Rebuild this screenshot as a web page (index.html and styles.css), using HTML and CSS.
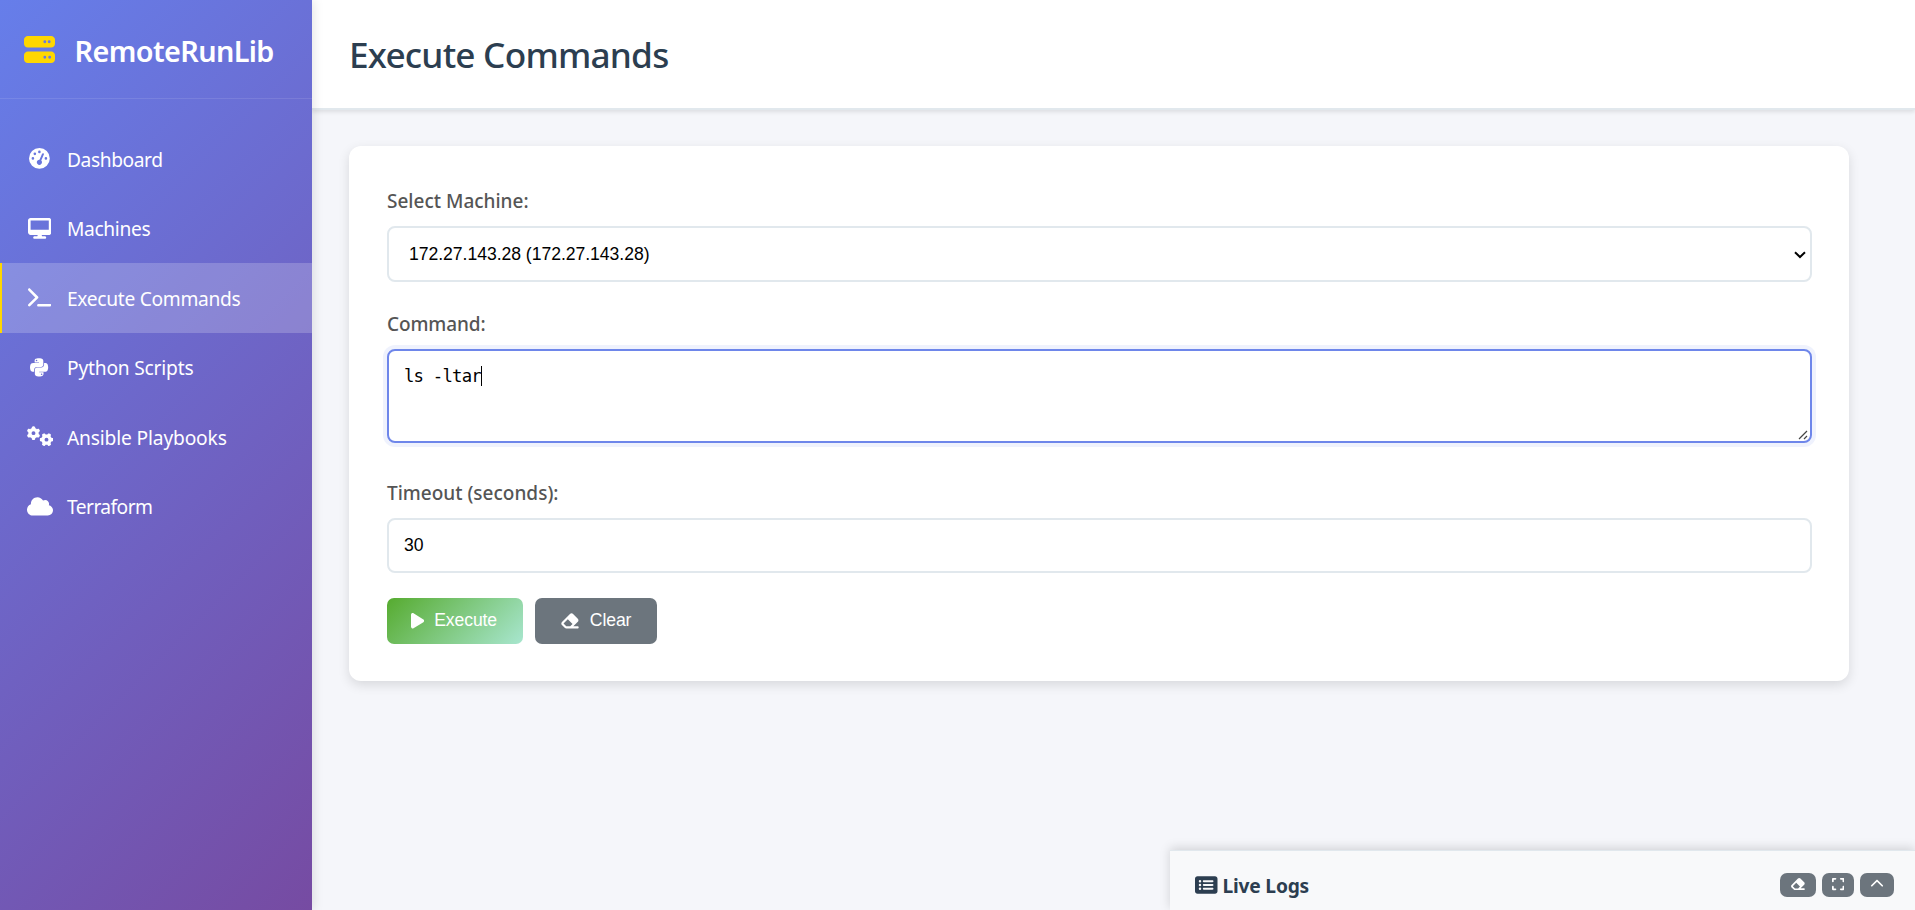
FILE: index.html
```html
<!DOCTYPE html>
<html lang="en">
<head>
<meta charset="utf-8">
<title>RemoteRunLib</title>
<link rel="stylesheet" href="styles.css">
</head>
<body>
<svg class="defs" aria-hidden="true">
  <symbol id="eraser" viewBox="0 0 576 512"><path d="M290.7 57.4L57.4 290.7c-25 25-25 65.5 0 90.5l80 80c12 12 28.3 18.7 45.3 18.7H288h9.4H512c17.7 0 32-14.3 32-32s-14.3-32-32-32H387.9L518.6 285.3c25-25 25-65.5 0-90.5L381.3 57.4c-25-25-65.5-25-90.5 0zM297.4 416H288l-105.4 0-80-80L227.3 211.3 364.7 348.7 297.4 416z"/></symbol>
  <symbol id="cog" viewBox="0 0 320 344"><path d="M308.5 135.3c7.1-6.3 9.9-16.2 6.2-25c-2.3-5.3-4.8-10.5-7.6-15.5L304 89.4c-3-5-6.3-9.9-9.8-14.6c-5.7-7.6-15.7-10.1-24.7-7.1l-28.2 9.3c-10.7-8.8-23-16-36.2-20.9L199 27.1c-1.9-9.3-9.1-16.7-18.5-17.8C173.9 8.4 167.2 8 160.4 8h-.7c-6.8 0-13.5 .4-20.1 1.2c-9.4 1.1-16.6 8.6-18.5 17.8L115 56.1c-13.3 5-25.5 12.1-36.2 20.9L50.5 67.8c-9-3-19-.5-24.7 7.1c-3.5 4.7-6.8 9.6-9.9 14.6l-3 5.3c-2.8 5-5.3 10.2-7.6 15.6c-3.7 8.7-.9 18.6 6.2 25l22.2 19.8C32.6 161.9 32 168.9 32 176s.6 14.1 1.7 20.9L11.5 216.7c-7.1 6.3-9.9 16.2-6.2 25c2.3 5.3 4.8 10.5 7.6 15.6l3 5.2c3 5.1 6.3 9.9 9.9 14.6c5.7 7.6 15.7 10.1 24.7 7.1l28.2-9.3c10.7 8.8 23 16 36.2 20.9l6.1 29.1c1.9 9.3 9.1 16.7 18.5 17.8c6.7 .8 13.5 1.2 20.4 1.2s13.7-.4 20.4-1.2c9.4-1.1 16.6-8.6 18.5-17.8l6.1-29.1c13.3-5 25.5-12.1 36.2-20.9l28.2 9.3c9 3 19 .5 24.7-7.1c3.5-4.7 6.8-9.5 9.8-14.6l3.1-5.4c2.8-5 5.3-10.2 7.6-15.5c3.7-8.7 .9-18.6-6.2-25l-22.2-19.8c1.1-6.8 1.7-13.8 1.7-20.9s-.6-14.1-1.7-20.9l22.2-19.8zM112 176a48 48 0 1 1 96 0 48 48 0 1 1 -96 0z"/></symbol>
</svg>
<div class="app">
  <aside class="sidebar">
    <div class="brand">
      <svg class="brand-icon" viewBox="0 0 512 512"><path d="M64 32C28.7 32 0 60.7 0 96v64c0 35.3 28.7 64 64 64H448c35.3 0 64-28.7 64-64V96c0-35.3-28.7-64-64-64H64zm280 72a24 24 0 1 1 0 48 24 24 0 1 1 0-48zm48 24a24 24 0 1 1 48 0 24 24 0 1 1 -48 0zM64 288c-35.3 0-64 28.7-64 64v64c0 35.3 28.7 64 64 64H448c35.3 0 64-28.7 64-64V352c0-35.3-28.7-64-64-64H64zm280 72a24 24 0 1 1 0 48 24 24 0 1 1 0-48zm56 24a24 24 0 1 1 48 0 24 24 0 1 1 -48 0z"/></svg>
      <span class="brand-name">RemoteRunLib</span>
    </div>
    <nav class="nav">
      <a class="nav-item"><span class="nav-icon"><svg viewBox="0 0 512 512"><path d="M0 256a256 256 0 1 1 512 0A256 256 0 1 1 0 256zM288 96a32 32 0 1 0 -64 0 32 32 0 1 0 64 0zM256 416c35.3 0 64-28.7 64-64c0-17.4-6.9-33.1-18.1-44.6L366 161.7c5.3-12.1-.2-26.3-12.3-31.6s-26.3 .2-31.6 12.3L257.9 288c-.6 0-1.3 0-1.9 0c-35.3 0-64 28.7-64 64s28.7 64 64 64zM176 144a32 32 0 1 0 -64 0 32 32 0 1 0 64 0zM96 288a32 32 0 1 0 0-64 32 32 0 1 0 0 64zm352-32a32 32 0 1 0 -64 0 32 32 0 1 0 64 0z"/></svg></span><span class="nav-text t-dash">Dashboard</span></a>
      <a class="nav-item"><span class="nav-icon"><svg viewBox="0 0 576 512"><path d="M64 0C28.7 0 0 28.7 0 64V352c0 35.3 28.7 64 64 64H240l-10.7 32H160c-17.7 0-32 14.3-32 32s14.3 32 32 32H416c17.7 0 32-14.3 32-32s-14.3-32-32-32H346.7L336 416H512c35.3 0 64-28.7 64-64V64c0-35.3-28.7-64-64-64H64zM512 64V288H64V64H512z"/></svg></span><span class="nav-text t-mach">Machines</span></a>
      <a class="nav-item active"><span class="nav-icon"><svg viewBox="0 0 576 512"><path d="M9.4 86.6C-3.1 74.1-3.1 53.9 9.4 41.4s32.8-12.5 45.3 0l192 192c12.5 12.5 12.5 32.8 0 45.3l-192 192c-12.5 12.5-32.8 12.5-45.3 0s-12.5-32.8 0-45.3L178.7 256 9.4 86.6zM256 416H544c17.7 0 32 14.3 32 32s-14.3 32-32 32H256c-17.7 0-32-14.3-32-32s14.3-32 32-32z"/></svg></span><span class="nav-text t-exec">Execute Commands</span></a>
      <a class="nav-item"><span class="nav-icon"><svg viewBox="0 0 448 512"><path d="M439.8 200.5c-7.7-30.9-22.3-54.2-53.4-54.2h-40.1v47.4c0 36.8-31.2 67.8-66.8 67.8H172.7c-29.2 0-53.4 25-53.4 54.3v101.8c0 29 25.2 46 53.4 54.3 33.8 9.9 66.3 11.7 106.8 0 26.9-7.8 53.4-23.5 53.4-54.3v-40.7H226.2v-13.6h160.2c31.1 0 42.6-21.7 53.4-54.2 11.2-33.5 10.7-65.7 0-108.6zM286.2 404c11.1 0 20.1 9.1 20.1 20.3 0 11.3-9 20.4-20.1 20.4-11 0-20.1-9.2-20.1-20.4.1-11.3 9.1-20.3 20.1-20.3zM167.8 248.1h106.8c29.7 0 53.4-24.5 53.4-54.3V91.9c0-29-24.4-50.7-53.4-55.6-35.8-5.9-74.7-5.6-106.8.1-45.2 8-53.4 24.7-53.4 55.6v40.7h106.9v13.6h-147c-31.1 0-58.3 18.7-66.8 54.2-9.8 40.7-10.2 66.1 0 108.6 7.6 31.6 25.7 54.2 56.8 54.2H101v-48.8c0-35.3 30.5-66.4 66.8-66.4zm-6.7-142.6c-11.1 0-20.1-9.1-20.1-20.3.1-11.3 9-20.4 20.1-20.4 11 0 20.1 9.2 20.1 20.4s-9 20.3-20.1 20.3z"/></svg></span><span class="nav-text t-py">Python Scripts</span></a>
      <a class="nav-item"><span class="nav-icon"><svg viewBox="0 0 640 512"><use href="#cog" width="320" height="344"/><use href="#cog" width="320" height="344" transform="translate(480 336) rotate(90) translate(-160 -176)"/></svg></span><span class="nav-text t-ans">Ansible Playbooks</span></a>
      <a class="nav-item"><span class="nav-icon"><svg viewBox="0 0 640 512"><path d="M0 336c0 79.5 64.5 144 144 144H512c70.7 0 128-57.3 128-128c0-61.9-44-113.6-102.4-125.4c4.1-10.7 6.4-22.4 6.4-34.6c0-53-43-96-96-96c-19.7 0-38.1 6-53.3 16.2C367 64.2 315.3 32 256 32C167.6 32 96 103.6 96 192c0 2.7 .1 5.4 .2 8.1C40.2 219.8 0 273.2 0 336z"/></svg></span><span class="nav-text t-terra">Terraform</span></a>
    </nav>
  </aside>
  <main class="main">
    <header class="header"><h1 class="title">Execute Commands</h1></header>
    <div class="content">
      <section class="card">
        <div class="label">Select Machine:</div>
        <div class="field select"><span>172.27.143.28 (172.27.143.28)</span>
          <svg class="chevron" viewBox="0 0 12 8"><path d="M1 1.2l5 4.8 5-4.8"/></svg>
        </div>
        <div class="label l-command">Command:</div>
        <div class="field textarea"><span>ls -ltar</span><i class="caret"></i>
          <svg class="grip" viewBox="0 0 10 10"><path d="M1 9l8-8M6 9l3-3"/></svg>
        </div>
        <div class="label">Timeout (seconds):</div>
        <div class="field number">30</div>
        <div class="actions">
          <button class="btn btn-run"><svg viewBox="0 0 384 512"><path d="M73 39c-14.8-9.1-33.4-9.4-48.5-.9S0 62.6 0 80V432c0 17.4 9.4 33.4 24.5 41.9s33.7 8.1 48.5-.9L361 297c14.3-8.7 23-24.2 23-41s-8.7-32.2-23-41L73 39z"/></svg><span>Execute</span></button>
          <button class="btn btn-clear"><svg viewBox="0 0 576 512"><use href="#eraser"/></svg><span>Clear</span></button>
        </div>
      </section>
    </div>
  </main>
</div>
<section class="logs">
  <div class="logs-title"><svg viewBox="0 0 576 512"><path d="M0 96C0 60.7 28.7 32 64 32H512c35.3 0 64 28.7 64 64V416c0 35.3-28.7 64-64 64H64c-35.3 0-64-28.7-64-64V96zM128 288a32 32 0 1 0 0-64 32 32 0 1 0 0 64zm32-128a32 32 0 1 0 -64 0 32 32 0 1 0 64 0zM128 384a32 32 0 1 0 0-64 32 32 0 1 0 0 64zm96-248c-13.3 0-24 10.7-24 24s10.7 24 24 24H448c13.3 0 24-10.7 24-24s-10.7-24-24-24H224zm0 96c-13.3 0-24 10.7-24 24s10.7 24 24 24H448c13.3 0 24-10.7 24-24s-10.7-24-24-24H224zm0 96c-13.3 0-24 10.7-24 24s10.7 24 24 24H448c13.3 0 24-10.7 24-24s-10.7-24-24-24H224z"/></svg><span class="logs-name">Live Logs</span></div>
  <div class="logs-tools">
    <button class="tool tool-a"><svg viewBox="0 0 576 512"><use href="#eraser"/></svg></button>
    <button class="tool tool-b"><svg viewBox="0 0 448 512"><path d="M32 32C14.3 32 0 46.3 0 64v96c0 17.7 14.3 32 32 32s32-14.3 32-32V96h64c17.7 0 32-14.3 32-32s-14.3-32-32-32H32zM64 352c0-17.7-14.3-32-32-32s-32 14.3-32 32v96c0 17.7 14.3 32 32 32h96c17.7 0 32-14.3 32-32s-14.3-32-32-32H64V352zM320 32c-17.7 0-32 14.3-32 32s14.3 32 32 32h64v64c0 17.7 14.3 32 32 32s32-14.3 32-32V64c0-17.7-14.3-32-32-32H320zM448 352c0-17.7-14.3-32-32-32s-32 14.3-32 32v64H320c-17.7 0-32 14.3-32 32s14.3 32 32 32h96c17.7 0 32-14.3 32-32V352z"/></svg></button>
    <button class="tool tool-c"><svg viewBox="0 0 512 512"><path d="M233.4 105.4c12.5-12.5 32.8-12.5 45.3 0l192 192c12.5 12.5 12.5 32.8 0 45.3s-32.8 12.5-45.3 0L256 173.3 86.6 342.6c-12.5 12.5-32.8 12.5-45.3 0s-12.5-32.8 0-45.3l192-192z"/></svg></button>
  </div>
</section>
</body>
</html>
```
FILE: styles.css
```css
* { box-sizing: border-box; margin: 0; padding: 0; }
body {
  height: 910px;
  overflow: hidden;
  background: #f5f6fa;
  color: #2c3e50;
  font-family: "Noto Sans", "Open Sans", sans-serif;
}
svg { display: block; fill: currentColor; }
.defs { display: none; }
.app { display: flex; height: 910px; }

.sidebar {
  position: relative;
  z-index: 2;
  flex: none;
  width: 312px;
  color: #fff;
  background: linear-gradient(135deg, #667eea 0%, #764ba2 100%);
  box-shadow: 2px 0 10px rgba(0, 0, 0, .1);
}
.brand {
  display: flex;
  align-items: center;
  height: 99px;
  padding-left: 24px;
  border-bottom: 1px solid rgba(255, 255, 255, .1);
}
.brand-icon { flex: none; width: 31px; height: 31px; margin-top: 1px; color: #ffd700; }
.brand-name { margin-left: 19.5px; padding-top: 3px; font-size: 28.8px; font-weight: 600; line-height: 40px; letter-spacing: -.6px; white-space: nowrap; }
.nav { padding-top: 25px; }
.nav-item { display: flex; align-items: center; height: 69.5px; padding-left: 27px; }
.nav-item.active { padding-left: 25px; border-left: 2px solid #ffd700; background: rgba(255, 255, 255, .2); }
.nav-icon { display: flex; flex: none; justify-content: center; width: 25px; margin-right: 15px; }
.nav-icon svg { flex: none; height: 20.8px; }
.nav-text { padding-top: 2px; font-size: 19.2px; line-height: 28px; letter-spacing: -.3px; white-space: nowrap; }
.t-dash { letter-spacing: -.42px; }
.t-mach { letter-spacing: -.35px; }
.t-py { letter-spacing: -.2px; }
.t-ans { letter-spacing: -.16px; }
.t-terra { letter-spacing: -.56px; }

.main { flex: 1; min-width: 0; }
.header {
  display: flex;
  align-items: center;
  height: 110px;
  padding-left: 37px;
  background: #fff;
  border-bottom: 2px solid #e1e8ed;
  box-shadow: 0 2px 4px rgba(0, 0, 0, .1);
}
.title { font-size: 35.2px; font-weight: 500; line-height: 48px; letter-spacing: -.78px; white-space: nowrap; }
.content { padding: 36px 66px 0 37px; }
.card {
  height: 535px;
  padding: 38px;
  border-radius: 12px;
  background: #fff;
  box-shadow: 0 4px 12px rgba(0, 0, 0, .12);
}
.label { height: 42px; font-size: 19px; font-weight: 500; line-height: 34px; color: #555; white-space: nowrap; }
.l-command { letter-spacing: -.1px; }
.field {
  position: relative;
  display: flex;
  width: 1424.5px;
  border: 2px solid #e1e8ed;
  border-radius: 8px;
  background: #fff;
  color: #000;
  font-family: "Liberation Sans", Arial, sans-serif;
  font-size: 17.6px;
}
.select { align-items: center; height: 56px; margin-bottom: 25px; padding-left: 20px; letter-spacing: -.04px; }
.chevron { position: absolute; right: 4px; top: 23px; width: 12px; height: 8px; fill: none; stroke: #000; stroke-width: 2; }
.textarea {
  height: 94px;
  margin-bottom: 33px;
  padding: 14px 15px;
  border-color: #6e86ea;
  box-shadow: 0 0 0 4px rgba(102, 126, 234, .1);
  font-family: "DejaVu Sans Mono", monospace;
  font-size: 17.3px;
  line-height: 23px;
  letter-spacing: -.8px;
}
.caret { width: 1px; height: 20px; margin-top: 1px; margin-left: 0; background: #000; }
.grip { position: absolute; right: 2px; bottom: 1px; width: 10px; height: 10px; fill: none; stroke: #444; stroke-width: 1.2; }
.number { align-items: center; height: 55px; padding-left: 15px; }
.actions { display: flex; gap: 12px; margin-top: 25px; }
.btn {
  display: flex;
  align-items: center;
  height: 46px;
  border: 0;
  border-radius: 7px;
  color: #fff;
  font-family: "Liberation Sans", Arial, sans-serif;
  font-size: 17.6px;
}
.btn svg { height: 17.6px; margin-right: 10px; }
.btn span { padding-bottom: 2px; letter-spacing: -.1px; }
.btn-run { width: 136px; padding-left: 24px; background: linear-gradient(135deg, #56ab2f, #a8e6cf); }
.btn-clear { width: 122px; padding-left: 25px; background: #6c757d; }

.logs {
  position: absolute;
  right: 0;
  bottom: 0;
  z-index: 3;
  display: flex;
  justify-content: space-between;
  width: 745px;
  height: 60px;
  padding: 22px 21px 0 25px;
  border-top: 1px solid #e1e8ed;
  background: #f8f9fa;
  box-shadow: 0 -2px 10px rgba(0, 0, 0, .15);
}
.logs-title { display: flex; align-items: center; height: 24px; }
.logs-title svg { width: 22.5px; height: 20px; }
.logs-name { margin-left: 5px; padding-top: 2px; font-size: 19.2px; font-weight: 700; line-height: 24px; letter-spacing: -.2px; white-space: nowrap; }
.logs-tools { display: flex; gap: 6px; height: 24px; }
.tool { display: flex; align-items: center; justify-content: center; height: 24px; padding-bottom: 2px; border: 0; border-radius: 7px; background: #6c757d; color: #fff; }
.tool svg { height: 14px; }
.tool-a { width: 36px; }
.tool-b { width: 32px; }
.tool-c { width: 34px; }
```
